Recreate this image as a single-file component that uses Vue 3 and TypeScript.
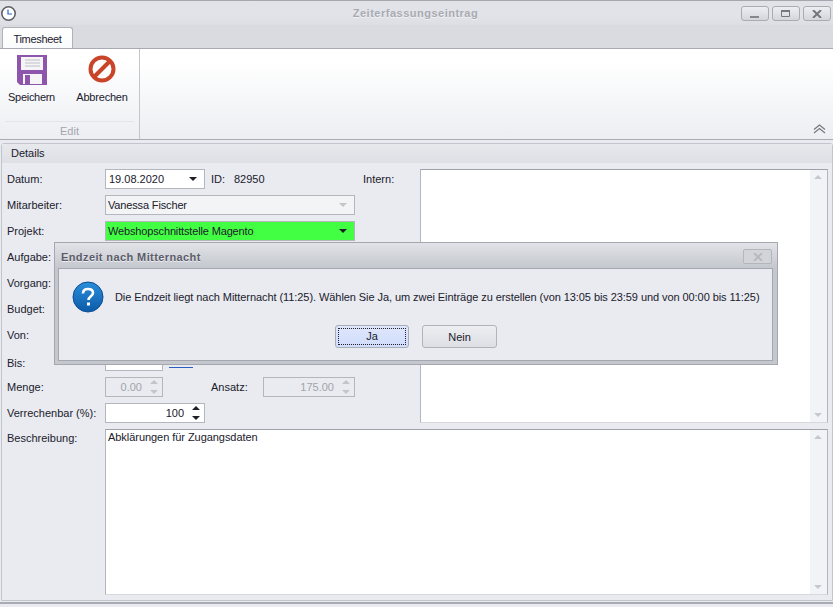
<script setup lang="ts">
interface Row { label: string }
const labels: Row[] = [
  { label: 'Datum:' }, { label: 'Mitarbeiter:' }, { label: 'Projekt:' }, { label: 'Aufgabe:' },
]
</script>

<template>
  <div class="win">
    <header class="titlebar">
      <svg class="clock" width="17" height="17" viewBox="0 0 17 17">
        <circle cx="8.5" cy="8.5" r="6.7" fill="#fff" stroke="#5f6068" stroke-width="1.6" />
        <path d="M8 4.5V9H12" fill="none" stroke="#2a66c4" stroke-width="1.2" />
      </svg>
      <span class="wintitle">Zeiterfassungseintrag</span>
      <div class="winbtns">
        <button class="wb"><svg width="10" height="8" viewBox="0 0 10 8"><path d="M0 6h9v2H0z" fill="#85868e" /></svg></button>
        <button class="wb"><svg width="10" height="8" viewBox="0 0 10 8"><path d="M0.5 0.5h8v6h-8z" fill="none" stroke="#77787f" stroke-width="1" /><path d="M0 0h9v2H0z" fill="#77787f" /></svg></button>
        <button class="wb"><svg width="10" height="8" viewBox="0 0 10 8"><path d="M1 0l8 8M9 0l-8 8" stroke="#75767d" stroke-width="2" /></svg></button>
      </div>
    </header>
    <div class="tabs"><div class="tab">Timesheet</div></div>
    <section class="ribbon">
      <div class="group">
        <div class="cmds">
          <div class="cmd save">
            <svg width="30" height="30" viewBox="0 0 30 30">
              <path d="M0 0H30V30H3L0 27Z" fill="#8e55ad" />
              <path d="M4 2H26V15H4Z" fill="#f5f4f6" />
              <path d="M8 5H23M8 8H23M8 11H23" stroke="#bfbfc4" stroke-width="1" />
              <path d="M6 19H25V29H6Z" fill="#f5f4f6" />
              <path d="M8 20H13V29H8Z" fill="#8e55ad" />
            </svg>
            <span>Speichern</span>
          </div>
          <i class="sep"></i>
          <div class="cmd cancel">
            <svg width="30" height="30" viewBox="0 0 30 30">
              <circle cx="15" cy="15" r="11.5" fill="none" stroke="#c9452a" stroke-width="4" />
              <path d="M7 23L23 7" stroke="#c9452a" stroke-width="4" />
            </svg>
            <span>Abbrechen</span>
          </div>
        </div>
        <div class="groupname">Edit</div>
      </div>
      <svg class="collapse" width="13" height="10" viewBox="0 0 13 10">
        <path d="M1 5.5L6.5 1L12 5.5M1 9L6.5 4.5L12 9" fill="none" stroke="#77787f" stroke-width="1.2" />
      </svg>
    </section>
    <main class="panel">
      <div class="panelhead">Details</div>
      <div class="panelbody">
        <div class="top">
          <div class="form">
            <div class="row">
              <label>{{ labels[0].label }}</label>
              <div class="field w100"><span>19.08.2020</span><b class="arrow"></b></div>
              <span class="id">ID:</span><span class="idv">82950</span>
            </div>
            <div class="row">
              <label>{{ labels[1].label }}</label>
              <div class="field w250 off"><span>Vanessa Fischer</span><b class="arrow faint"></b></div>
            </div>
            <div class="row">
              <label>{{ labels[2].label }}</label>
              <div class="field w250 green"><span>Webshopschnittstelle Magento</span><b class="arrow"></b></div>
            </div>
            <div class="row"><label>{{ labels[3].label }}</label></div>
            <div class="row"><label>Vorgang:</label></div>
            <div class="row"><label>Budget:</label></div>
            <div class="row"><label>Von:</label></div>
            <div class="row">
              <label class="low">Bis:</label>
              <div class="field w58"><span></span><b class="arrow"></b></div>
              <span class="link"></span>
            </div>
            <div class="row">
              <label>Menge:</label>
              <div class="field w58 dis num"><span>0.00</span><em class="spin faint"></em></div>
              <span class="ansatz">Ansatz:</span>
              <div class="field w92 dis num"><span>175.00</span><em class="spin faint"></em></div>
            </div>
            <div class="row">
              <label>Verrechenbar (%):</label>
              <div class="field w100 num"><span class="dark">100</span><em class="spin"></em></div>
            </div>
          </div>
          <span class="intern">Intern:</span>
          <div class="memo"><div class="scroll"><b class="up"></b><b class="down"></b></div></div>
        </div>
        <div class="desc">
          <label>Beschreibung:</label>
          <div class="memo big">
            <p>Abklärungen für Zugangsdaten</p>
            <div class="scroll"><b class="up"></b><b class="down"></b></div>
          </div>
        </div>
      </div>
    </main>
    <div class="statusbar"></div>

    <div class="dialog">
      <div class="dtitle">
        <span>Endzeit nach Mitternacht</span>
        <button class="dclose"><svg width="10" height="8" viewBox="0 0 10 8"><path d="M1 0l8 8M9 0l-8 8" stroke="#b7b9bf" stroke-width="2" /></svg></button>
      </div>
      <div class="dbody">
        <div class="msg">
          <svg class="qicon" width="32" height="32" viewBox="0 0 32 32">
            <defs>
              <linearGradient id="qb" x1="0" y1="0" x2="0" y2="1">
                <stop offset="0" stop-color="#2b8fdc" /><stop offset="1" stop-color="#0b5aa8" />
              </linearGradient>
            </defs>
            <circle cx="16" cy="16" r="15" fill="url(#qb)" stroke="#0c4d92" />
            <path d="M11 12.5C11 9.5 13 8 16 8C19 8 21 9.6 21 12C21 15 16.5 15.5 16.5 19" fill="none" stroke="#fff" stroke-width="2.6" />
            <rect x="15" y="21.5" width="3" height="3" fill="#fff" />
          </svg>
          <p>Die Endzeit liegt nach Mitternacht (11:25). Wählen Sie Ja, um zwei Einträge zu erstellen (von 13:05 bis 23:59 und von 00:00 bis 11:25)</p>
        </div>
        <div class="dbtns">
          <button class="dbtn yes"><span>Ja</span></button>
          <button class="dbtn">Nein</button>
        </div>
      </div>
    </div>
  </div>
</template>

<style>
html, body { margin: 0; padding: 0; }
</style>

<style scoped>
* { box-sizing: border-box; }
.win {
  position: relative; width: 833px; height: 607px; overflow: hidden;
  display: flex; flex-direction: column;
  background: #e9ebf0; color: #20202c;
  font: 11px/14px "Liberation Sans", "Noto Sans", sans-serif;
  border-top: 1px solid #a5a6b0;
}
.titlebar {
  height: 24px; flex: none; display: flex; align-items: flex-start; position: relative;
  background: linear-gradient(#e0e2e7, #e2e4e9 55%, #dcdee3);
}
.clock { margin: 4px 0 0 0; flex: none; }
.wintitle {
  position: absolute; left: 0; right: 2px; top: 5px; text-align: center;
  font-weight: 700; color: #a8aab1; text-shadow: 0 1px 0 #f0f1f4; letter-spacing: 0.5px;
}
.winbtns { margin: 5px 2px 0 auto; display: flex; gap: 3px; }
.wb {
  width: 28px; height: 15px; padding: 0; display: flex; align-items: center; justify-content: center;
  border: 1px solid #a9abb3; border-radius: 3px; background: linear-gradient(#eceef1, #d4d6dc);
}
.tabs { height: 23px; flex: none; background: #d9dbe1; padding: 2px 0 0 2px; }
.tab {
  width: 71px; height: 21px; padding-top: 4px; text-align: center; letter-spacing: -0.3px;
  background: linear-gradient(#fff, #fafbfc); color: #20202c;
  border: 1px solid #b0b2ba; border-bottom: 0; border-radius: 3px 3px 0 0;
}
.ribbon {
  height: 92px; flex: none; position: relative;
  background: linear-gradient(#fff 15%, #eceef2);
  border-top: 1px solid #a9abb3; border-bottom: 1px solid #a9abb3;
}
.group { width: 140px; height: 90px; border-right: 1px solid #c4c6cc; display: flex; flex-direction: column; }
.cmds { display: flex; height: 72px; }
.cmd { display: flex; flex-direction: column; align-items: center; flex: none; }
.cmd svg { flex: none; margin-bottom: 6px; }
.save { width: 67px; padding-top: 6px; margin-left: -2px; letter-spacing: -0.3px; }
.save svg { margin-bottom: 5px; }
.cancel { width: 74px; padding-top: 5px; letter-spacing: -0.2px; }
.sep { width: 1px; height: 69px; background: #e2e4e8; box-shadow: 1px 0 0 #fff; }
.groupname {
  margin: 0 5px; border-top: 1px solid #e2e4e8; flex: 1; text-align: center; color: #a3a5ad; padding-top: 2px;
}
.collapse { position: absolute; right: 7px; bottom: 5px; }
.panel {
  margin: 3px 0 0 1px; height: 458px; flex: none; border: 1px solid #c3c5cc; border-radius: 3px 3px 0 0;
  background: #e9ebf0; display: flex; flex-direction: column;
}
.panelhead {
  height: 19px; flex: none; padding: 2px 0 0 9px;
  background: linear-gradient(#e7e9ed, #dddfe4); color: #20202c;
}
.panelbody { flex: 1; padding: 6px 4px 0 5px; display: flex; flex-direction: column; gap: 6px; }
.top { display: flex; height: 254px; flex: none; }
.form { width: 356px; display: flex; flex-direction: column; gap: 6px; flex: none; }
.row { display: flex; align-items: center; height: 20px; }
.row label { width: 98px; flex: none; color: #20202c; }
.low { padding-top: 4px; }
.field {
  height: 20px; display: flex; align-items: center; padding: 0 2px; position: relative;
  background: #fff; border: 1px solid #b4b6bd; flex: none;
}
.field span { flex: 1; }
.w100 span { padding-left: 1px; }
.w250 span { letter-spacing: -0.15px; }
.w100 { width: 100px; }
.w250 { width: 250px; }
.w58 { width: 58px; }
.w92 { width: 92px; }
.off { background: #f3f4f6; }
.green { background: #43ff43; }
.dis { background: #e9ebf0; color: #a2a4ab; }
.num span { text-align: right; padding-right: 18px; }
.dark { color: #20202c; }
.arrow {
  position: absolute; right: 7px; top: 7px; width: 0; height: 0;
  border: 4px solid transparent; border-top: 4px solid #1e1e28; border-bottom: 0;
}
.arrow.faint { border-top-color: #c3c5cb; }
.spin { position: absolute; right: 3px; top: 2px; width: 10px; height: 14px; }
.spin::before, .spin::after {
  content: ""; position: absolute; left: 1px; width: 0; height: 0;
  border: 4px solid transparent;
}
.spin::before { top: 0; border-top: 0; border-bottom: 4px solid #1e1e28; }
.spin::after { bottom: 0; border-bottom: 0; border-top: 4px solid #1e1e28; }
.spin.faint::before { border-bottom-color: #c3c5cb; }
.spin.faint::after { border-top-color: #c3c5cb; }
.id { margin-left: 6px; width: 23px; }
.ansatz { margin-left: 48px; width: 52px; }
.link { width: 24px; height: 1px; background: #2a5fc0; margin: 12px 0 0 6px; }
.intern { width: 57px; flex: none; padding-top: 3px; }
.memo {
  position: relative; flex: 1; background: #fff; border: 1px solid #b4b6bd; border-top-color: #9fa1a9;
  border-bottom-color: #d6d8dc;
}
.scroll { position: absolute; right: 0; top: 0; bottom: 0; width: 17px; background: #f2f3f6; }
.up, .down { position: absolute; left: 4px; width: 0; height: 0; border: 4px solid transparent; }
.up { top: 5px; border-top: 0; border-bottom: 4px solid #c7c8ce; }
.down { bottom: 5px; border-bottom: 0; border-top: 4px solid #c7c8ce; }
.desc { display: flex; flex: 1; margin-bottom: 5px; }
.desc label { width: 98px; flex: none; padding-top: 2px; }
.big p { margin: 0; padding: 0 2px; letter-spacing: -0.05px; }
.statusbar { flex: 1; background: #e9ebf0; border-top: 2px solid #a9abb3; margin-top: 1px; }
.dialog {
  position: absolute; left: 54px; top: 241px; width: 724px; height: 123px;
  border: 1px solid #a5a7af; padding: 0 4px 3px 3px;
  background: linear-gradient(#e1e3e8, #c4c7cd 25px, #c4c7cd);
  display: flex; flex-direction: column;
}
.dtitle { height: 25px; flex: none; display: flex; align-items: center; padding: 2px 1px 0 3px; }
.dtitle span { font-weight: 700; color: #5a5c6a; text-shadow: 0 1px 0 #eceef1; letter-spacing: 0.4px; }
.dclose {
  margin-left: auto; width: 29px; height: 15px; padding: 0; display: flex; align-items: center; justify-content: center;
  background: #d2d4d9; border: 1px solid #b4b6bc; border-radius: 2px;
}
.dbody { flex: 1; background: #e9ebf0; border: 1px solid #a5a7af; display: flex; flex-direction: column; }
.msg { display: flex; align-items: center; padding: 10px 0 0 13px; height: 46px; }
.qicon { flex: none; }
.msg p { margin: 0 0 0 11px; white-space: nowrap; color: #20202c; letter-spacing: -0.07px; }
.dbtns { display: flex; gap: 13px; margin: 10px 0 0 276px; }
.dbtn {
  width: 75px; height: 23px; padding: 0; font: inherit; color: #20202c;
  border: 1px solid #b1b3ba; border-radius: 3px; background: linear-gradient(#eceef1, #dddfe4);
}
.yes { width: 74px; padding: 2px; background: linear-gradient(#dfe7fc, #cfdcfb); border-color: #a9abb5; }
.yes span { display: block; height: 100%; border: 1px dotted #20202c; line-height: 15px; }
</style>
